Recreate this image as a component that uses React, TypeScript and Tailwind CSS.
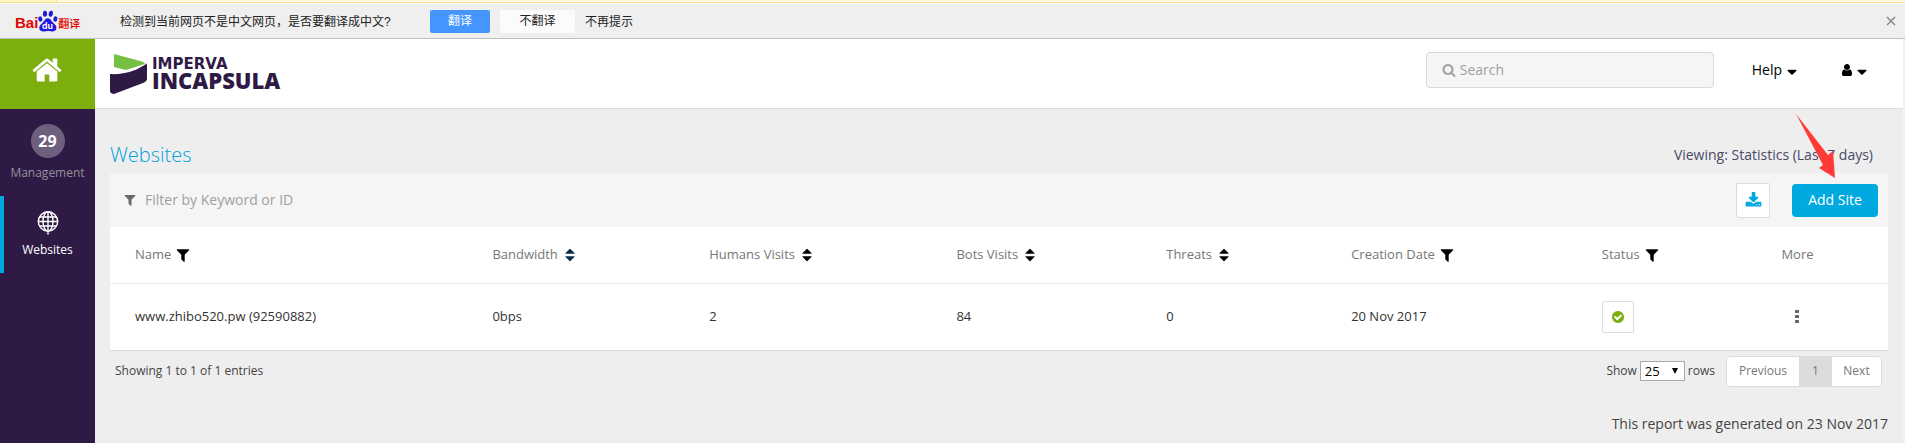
import React from 'react';

const icons = {
  home: 'M1472 992v480q0 26-19 45t-45 19h-384v-384h-256v384h-384q-26 0-45-19t-19-45v-480q0-1 .5-3t.5-3l575-474 575 474q1 2 1 6zm223-69l-62 74q-8 9-21 11h-3q-13 0-21-7l-692-577-692 577q-12 8-24 7-13-2-21-11l-62-74q-8-10-7-23.5t11-21.5l719-599q32-26 76-26t76 26l244 204v-195q0-14 9-23t23-9h192q14 0 23 9t9 23v408l219 182q10 8 11 21.5t-7 23.5z',
  search: 'M1216 832q0-185-131.5-316.5t-316.5-131.5-316.5 131.5-131.5 316.5 131.5 316.5 316.5 131.5 316.5-131.5 131.5-316.5zm512 832q0 52-38 90t-90 38q-54 0-90-38l-343-342q-179 124-399 124-143 0-273.5-55.5t-225-150-150-225-55.5-273.5 55.5-273.5 150-225 225-150 273.5-55.5 273.5 55.5 225 150 150 225 55.5 273.5q0 220-124 399l343 343q37 37 37 90z',
  user: 'M1536 1399q0 109-62.5 187t-150.5 78h-854q-88 0-150.5-78t-62.5-187q0-85 8.5-160.5t31.5-152 58.5-131 94-89 134.5-34.5q131 128 313 128t313-128q76 0 134.5 34.5t94 89 58.5 131 31.5 152 8.5 160.5zm-256-887q0 159-112.5 271.5t-271.5 112.5-271.5-112.5-112.5-271.5 112.5-271.5 271.5-112.5 271.5 112.5 112.5 271.5z',
  filter: 'M1595 295q17 41-14 70l-493 493v742q0 42-39 59-13 5-25 5-27 0-45-19l-256-256q-19-19-19-45v-486l-493-493q-31-29-14-70 17-39 59-39h1280q42 0 59 39z',
  sort: 'M1408 1088q0 26-19 45l-448 448q-19 19-45 19t-45-19l-448-448q-19-19-19-45t19-45 45-19h896q26 0 45 19t19 45zm0-384q0 26-19 45t-45 19h-896q-26 0-45-19t-19-45 19-45l448-448q19-19 45-19t45 19l448 448q19 19 19 45z',
  download: 'M1344 1344q0-26-19-45t-45-19-45 19-19 45 19 45 45 19 45-19 19-45zm256 0q0-26-19-45t-45-19-45 19-19 45 19 45 45 19 45-19 19-45zm128-224v320q0 40-28 68t-68 28h-1472q-40 0-68-28t-28-68v-320q0-40 28-68t68-28h465l135 136q58 56 136 56t136-56l136-136h464q40 0 68 28t28 68zm-325-569q17 41-14 70l-448 448q-18 19-45 19t-45-19l-448-448q-31-29-14-70 17-39 59-39h256v-448q0-26 19-45t45-19h256q26 0 45 19t19 45v448h256q42 0 59 39z',
  check: 'M1412 734q0-28-18-46l-91-90q-19-19-45-19t-45 19l-408 407-226-226q-19-19-45-19t-45 19l-91 90q-18 18-18 46 0 27 18 45l362 362q19 19 45 19 27 0 46-19l543-543q18-18 18-45zm252 162q0 209-103 385.5t-279.5 279.5-385.5 103-385.5-103-279.5-279.5-103-385.5 103-385.5 279.5-279.5 385.5-103 385.5 103 279.5 279.5 103 385.5z',
  caret: 'M1408 704q0 26-19 45l-448 448q-19 19-45 19t-45-19l-448-448q-19-19-19-45t19-45 45-19h896q26 0 45 19t19 45z',
};

const Icon = ({ name, className }: { name: keyof typeof icons; className: string }) => (
  <svg viewBox="0 0 1792 1792" fill="currentColor" aria-hidden="true" className={className}>
    <path d={icons[name]} />
  </svg>
);

const columns: { label: string; icon?: 'filter' | 'sort'; width: string; color?: string }[] = [
  { label: 'Name', icon: 'filter', width: 'w-[20.1%]' },
  { label: 'Bandwidth', icon: 'sort', width: 'w-[12.2%]', color: 'text-[#0a2a4a]' },
  { label: 'Humans Visits', icon: 'sort', width: 'w-[13.9%]' },
  { label: 'Bots Visits', icon: 'sort', width: 'w-[11.8%]' },
  { label: 'Threats', icon: 'sort', width: 'w-[10.4%]' },
  { label: 'Creation Date', icon: 'filter', width: 'w-[14.1%]' },
  { label: 'Status', icon: 'filter', width: 'w-[10.1%]' },
  { label: 'More', width: 'w-[7.4%]' },
];

const BaiduLogo = () => (
  <div className="flex w-[68px] items-center text-[#e10601]">
    <span className="pt-1 font-[Liberation_Sans,sans-serif] text-[15px] font-bold leading-4">Bai</span>
    <svg viewBox="0 0 20 22" className="h-[22px] w-5 shrink-0">
      <g fill="#2319dc">
        <ellipse cx="2.3" cy="9" rx="2" ry="2.7" transform="rotate(-15 2.3 9)" />
        <ellipse cx="7" cy="3.8" rx="2.1" ry="3" />
        <ellipse cx="12.8" cy="3.8" rx="2.1" ry="3" transform="rotate(12 12.8 3.8)" />
        <ellipse cx="17.4" cy="9" rx="2" ry="2.7" transform="rotate(10 17.4 9)" />
        <path d="M9.8 8.2c3 0 3.6 2.9 5.6 4.7 2 1.7 3.4 3.2 3 5.600-.5 2.800-3 3.100-5 2.900-1.300-.2-2.300-.4-3.600-.4s-2.300.3-3.600.4c-2.500.2-4.500-.5-4.900-3-.3-2.400 1.300-3.900 3-5.500 2-1.700 2.500-4.700 5.500-4.700z" />
      </g>
      <text x="4" y="19" fill="#fff" fontSize="9" fontWeight="700" fontFamily="Liberation Sans, sans-serif">du</text>
    </svg>
    <span className="pt-1 font-[Noto_Sans_CJK_SC,sans-serif] text-[11px] font-medium leading-4">翻译</span>
  </div>
);

const TranslateBar = () => (
  <div className="flex h-[35px] items-center border-b border-[#bfbfbf] bg-[#efefef] pl-[15px] pr-[9px] font-[Liberation_Sans,Noto_Sans_CJK_SC,sans-serif] text-xs text-[#222]">
    <BaiduLogo />
    <p className="ml-[37px] w-[310px] pt-0.5">检测到当前网页不是中文网页，是否要翻译成中文?</p>
    <button className="h-[23px] w-[60px] rounded-xs bg-[#4595ff] text-white">翻译</button>
    <button className="ml-2.5 h-[23px] w-[75px] rounded-xs bg-[#fbfbfb]">不翻译</button>
    <a href="#" className="ml-2.5 pt-0.5">不再提示</a>
    <button aria-label="Close" className="ml-auto text-[#888]">
      <svg viewBox="0 0 10 10" className="size-2.5" stroke="currentColor" strokeWidth="1.5">
        <path d="M1 1l8 8M9 1l-8 8" />
      </svg>
    </button>
  </div>
);

const Sidebar = () => (
  <nav className="flex w-[95px] shrink-0 flex-col bg-[#2f1a45] text-xs leading-5">
    <a href="#" aria-label="Home" className="flex h-[70px] justify-center bg-[#7cae0e] pr-0.5 pt-[15px] text-white">
      <Icon name="home" className="size-8" />
    </a>
    <a href="#" className="flex h-[87px] flex-col items-center pt-[15px] text-[#93909a]">
      <span className="flex size-[34px] items-center justify-center rounded-full bg-[#6e5f7e] text-base font-bold text-white">29</span>
      <span className="mt-[5px]">Management</span>
    </a>
    <a href="#" className="flex h-[77px] flex-col items-center border-l-4 border-[#00a9e0] pr-1 pt-[15px] text-white">
      <svg viewBox="0 0 22 24" className="h-6 w-[22px]" fill="none" stroke="currentColor" strokeWidth="1.4">
        <circle cx="11" cy="10.5" r="9.7" />
        <ellipse cx="11" cy="10.5" rx="5" ry="9.7" />
        <path d="M11 1v19M2.5 6h17M1.3 10.5h19.4M2.5 15h17" />
        <path d="M9.5 21.5h3L11 24z" fill="currentColor" stroke="none" />
      </svg>
      <span className="mt-[5px]">Websites</span>
    </a>
  </nav>
);

const Header = () => (
  <header className="flex h-[70px] items-center border-b border-[#dcdcdc] bg-white pl-[15px] pr-[33px] text-sm">
    <a href="#" className="flex items-center text-[#2f1a45]">
      <svg viewBox="0 0 38 40" className="h-10 w-[38px]">
        <path d="M4 0l28 7.5c3 1 3.5 2 1 3L16 16 4 13z" fill="#76c043" />
        <path d="M0 20c12 1 25-3 31-7 4-2 5-3 5-4l1 2v14c0 2-2 3-4 4L4 40c-2 0-4-1-4-3z" fill="#2f1a45" />
      </svg>
      <span className="ml-1 flex flex-col">
        <span className="font-[DejaVu_Sans,sans-serif] text-[15px] font-bold leading-3">IMPERVA</span>
        <span className="text-[22px] font-extrabold leading-5">INCAPSULA</span>
      </span>
    </a>
    <div className="ml-auto flex items-center pb-2">
      <label className="flex h-9 w-72 items-center rounded-sm border border-[#d9d9d9] bg-[#f5f5f5] pl-[15px] text-[#a0a0a0]">
        <Icon name="search" className="size-[14px]" />
        <input aria-label="Search" placeholder="Search" className="ml-1 w-56 outline-none placeholder:text-[#a0a0a0]" />
      </label>
      <button className="ml-[38px] flex items-center text-black">
        Help
        <Icon name="caret" className="ml-0.5 mt-1 size-4" />
      </button>
      <button aria-label="Account" className="ml-10 flex items-center text-black">
        <Icon name="user" className="size-[14px]" />
        <Icon name="caret" className="mt-1 size-4" />
      </button>
    </div>
  </header>
);

const SitesTable = () => (
  <table className="w-full table-fixed border-b border-[#d8d8d8] bg-white text-left text-[13px] text-[#333]">
    <thead>
      <tr className="h-14 border-b border-[#ececec] text-[#777]">
        {columns.map((col) => (
          <th key={col.label} className={`${col.width} pl-[25px] font-normal`}>
            <span className="flex items-center">
              {col.label}
              {col.icon && (
                <button aria-label={`${col.icon} ${col.label}`} className={`ml-1 ${col.color ?? 'text-black'}`}>
                  <Icon name={col.icon} className="size-4" />
                </button>
              )}
            </span>
          </th>
        ))}
      </tr>
    </thead>
    <tbody>
      <tr className="h-[67px]">
        <td className="pl-[25px]"><a href="#">www.zhibo520.pw (92590882)</a></td>
        <td className="pl-[25px]">0bps</td>
        <td className="pl-[25px]">2</td>
        <td className="pl-[25px]">84</td>
        <td className="pl-[25px]">0</td>
        <td className="pl-[25px]">20 Nov 2017</td>
        <td className="pl-[25px]">
          <button aria-label="Active" className="flex size-8 items-center justify-center rounded-xs border border-[#dcdcdc] text-[#7cae0e]">
            <Icon name="check" className="size-[14px]" />
          </button>
        </td>
        <td className="pl-[25px]">
          <button aria-label="More" className="flex w-8 justify-center text-[#666]">
            <svg viewBox="0 0 4 13" className="h-[13px] w-1" fill="currentColor">
              <rect width="4" height="3" rx=".5" />
              <rect y="5" width="4" height="3" rx=".5" />
              <rect y="10" width="4" height="3" rx=".5" />
            </svg>
          </button>
        </td>
      </tr>
    </tbody>
  </table>
);

const TableFooter = () => (
  <div className="flex items-center pl-[5px] pr-1.5 pt-[5px] text-xs text-[#444]">
    <p>Showing 1 to 1 of 1 entries</p>
    <label className="ml-auto flex items-center">
      Show
      <span className="relative mx-[3px] flex">
        <select className="h-5 w-[45px] appearance-none border border-[#a9a9a9] bg-white pl-1 text-[13px] leading-4 text-black">
          <option>25</option>
        </select>
        <svg viewBox="0 0 6 6" className="pointer-events-none absolute right-[7px] top-[7px] size-1.5">
          <path d="M0 0h6L3 6z" />
        </svg>
      </span>
      rows
    </label>
    <div className="ml-[11px] flex h-[31px] overflow-hidden rounded-sm border border-[#dcdcdc] bg-white text-[#777]">
      <button className="w-[72px]">Previous</button>
      <button className="w-[33px] bg-[#dcdcdc]">1</button>
      <button className="w-[49px]">Next</button>
    </div>
  </div>
);

const App = () => {
  return (
    <div className="flex min-h-screen flex-col bg-[#eee] font-[Open_Sans,sans-serif]">
      <div className="h-[3px] border-b border-[#ffe08a] bg-[#fffae0]">
        <div className="h-full w-[57px] border-r border-[#ffe08a] bg-[#fff3c0]" />
      </div>
      <div className="h-px bg-white" />
      <TranslateBar />
      <div className="flex flex-1 border-r-2 border-[#f3f3f3]">
        <Sidebar />
        <div className="flex min-w-0 flex-1 flex-col">
          <Header />
          <main className="relative px-[15px] text-sm text-[#444]">
            <div className="flex h-16 items-center justify-between pr-[15px] pt-7">
              <h1 className="text-xl font-light text-[#00a2dc]">Websites</h1>
              <p className="text-[#4a4a68]">Viewing: Statistics (Last 7 days)</p>
            </div>
            <div className="flex h-[54px] items-center bg-[#f5f5f5] pl-[13px] pr-2.5">
              <label className="flex flex-1 items-center text-[#6b6b6b]">
                <Icon name="filter" className="size-[14px]" />
                <input
                  aria-label="Filter by Keyword or ID"
                  placeholder="Filter by Keyword or ID"
                  className="ml-2 w-80 outline-none placeholder:text-[#a0a0a0]"
                />
              </label>
              <button aria-label="Download" className="flex h-[35px] w-[34px] items-center justify-center rounded-xs border border-[#dcdcdc] bg-white text-[#00a9e0]">
                <Icon name="download" className="size-[17px]" />
              </button>
              <button className="ml-[22px] h-[33px] w-[86px] rounded-sm bg-[#00a9e0] text-white">Add Site</button>
            </div>
            <SitesTable />
            <TableFooter />
            <p className="pt-[27px] text-right">This report was generated on 23 Nov 2017</p>
            {/* pointer to the Add Site button */}
            <svg viewBox="0 0 42 66" className="pointer-events-none absolute right-[66px] top-1 h-[66px] w-[42px]">
              <path d="M1 1L33 42 38 38 40 65 24 55 28 52z" fill="#ff3b38" />
            </svg>
          </main>
        </div>
      </div>
    </div>
  );
};

export default App;
